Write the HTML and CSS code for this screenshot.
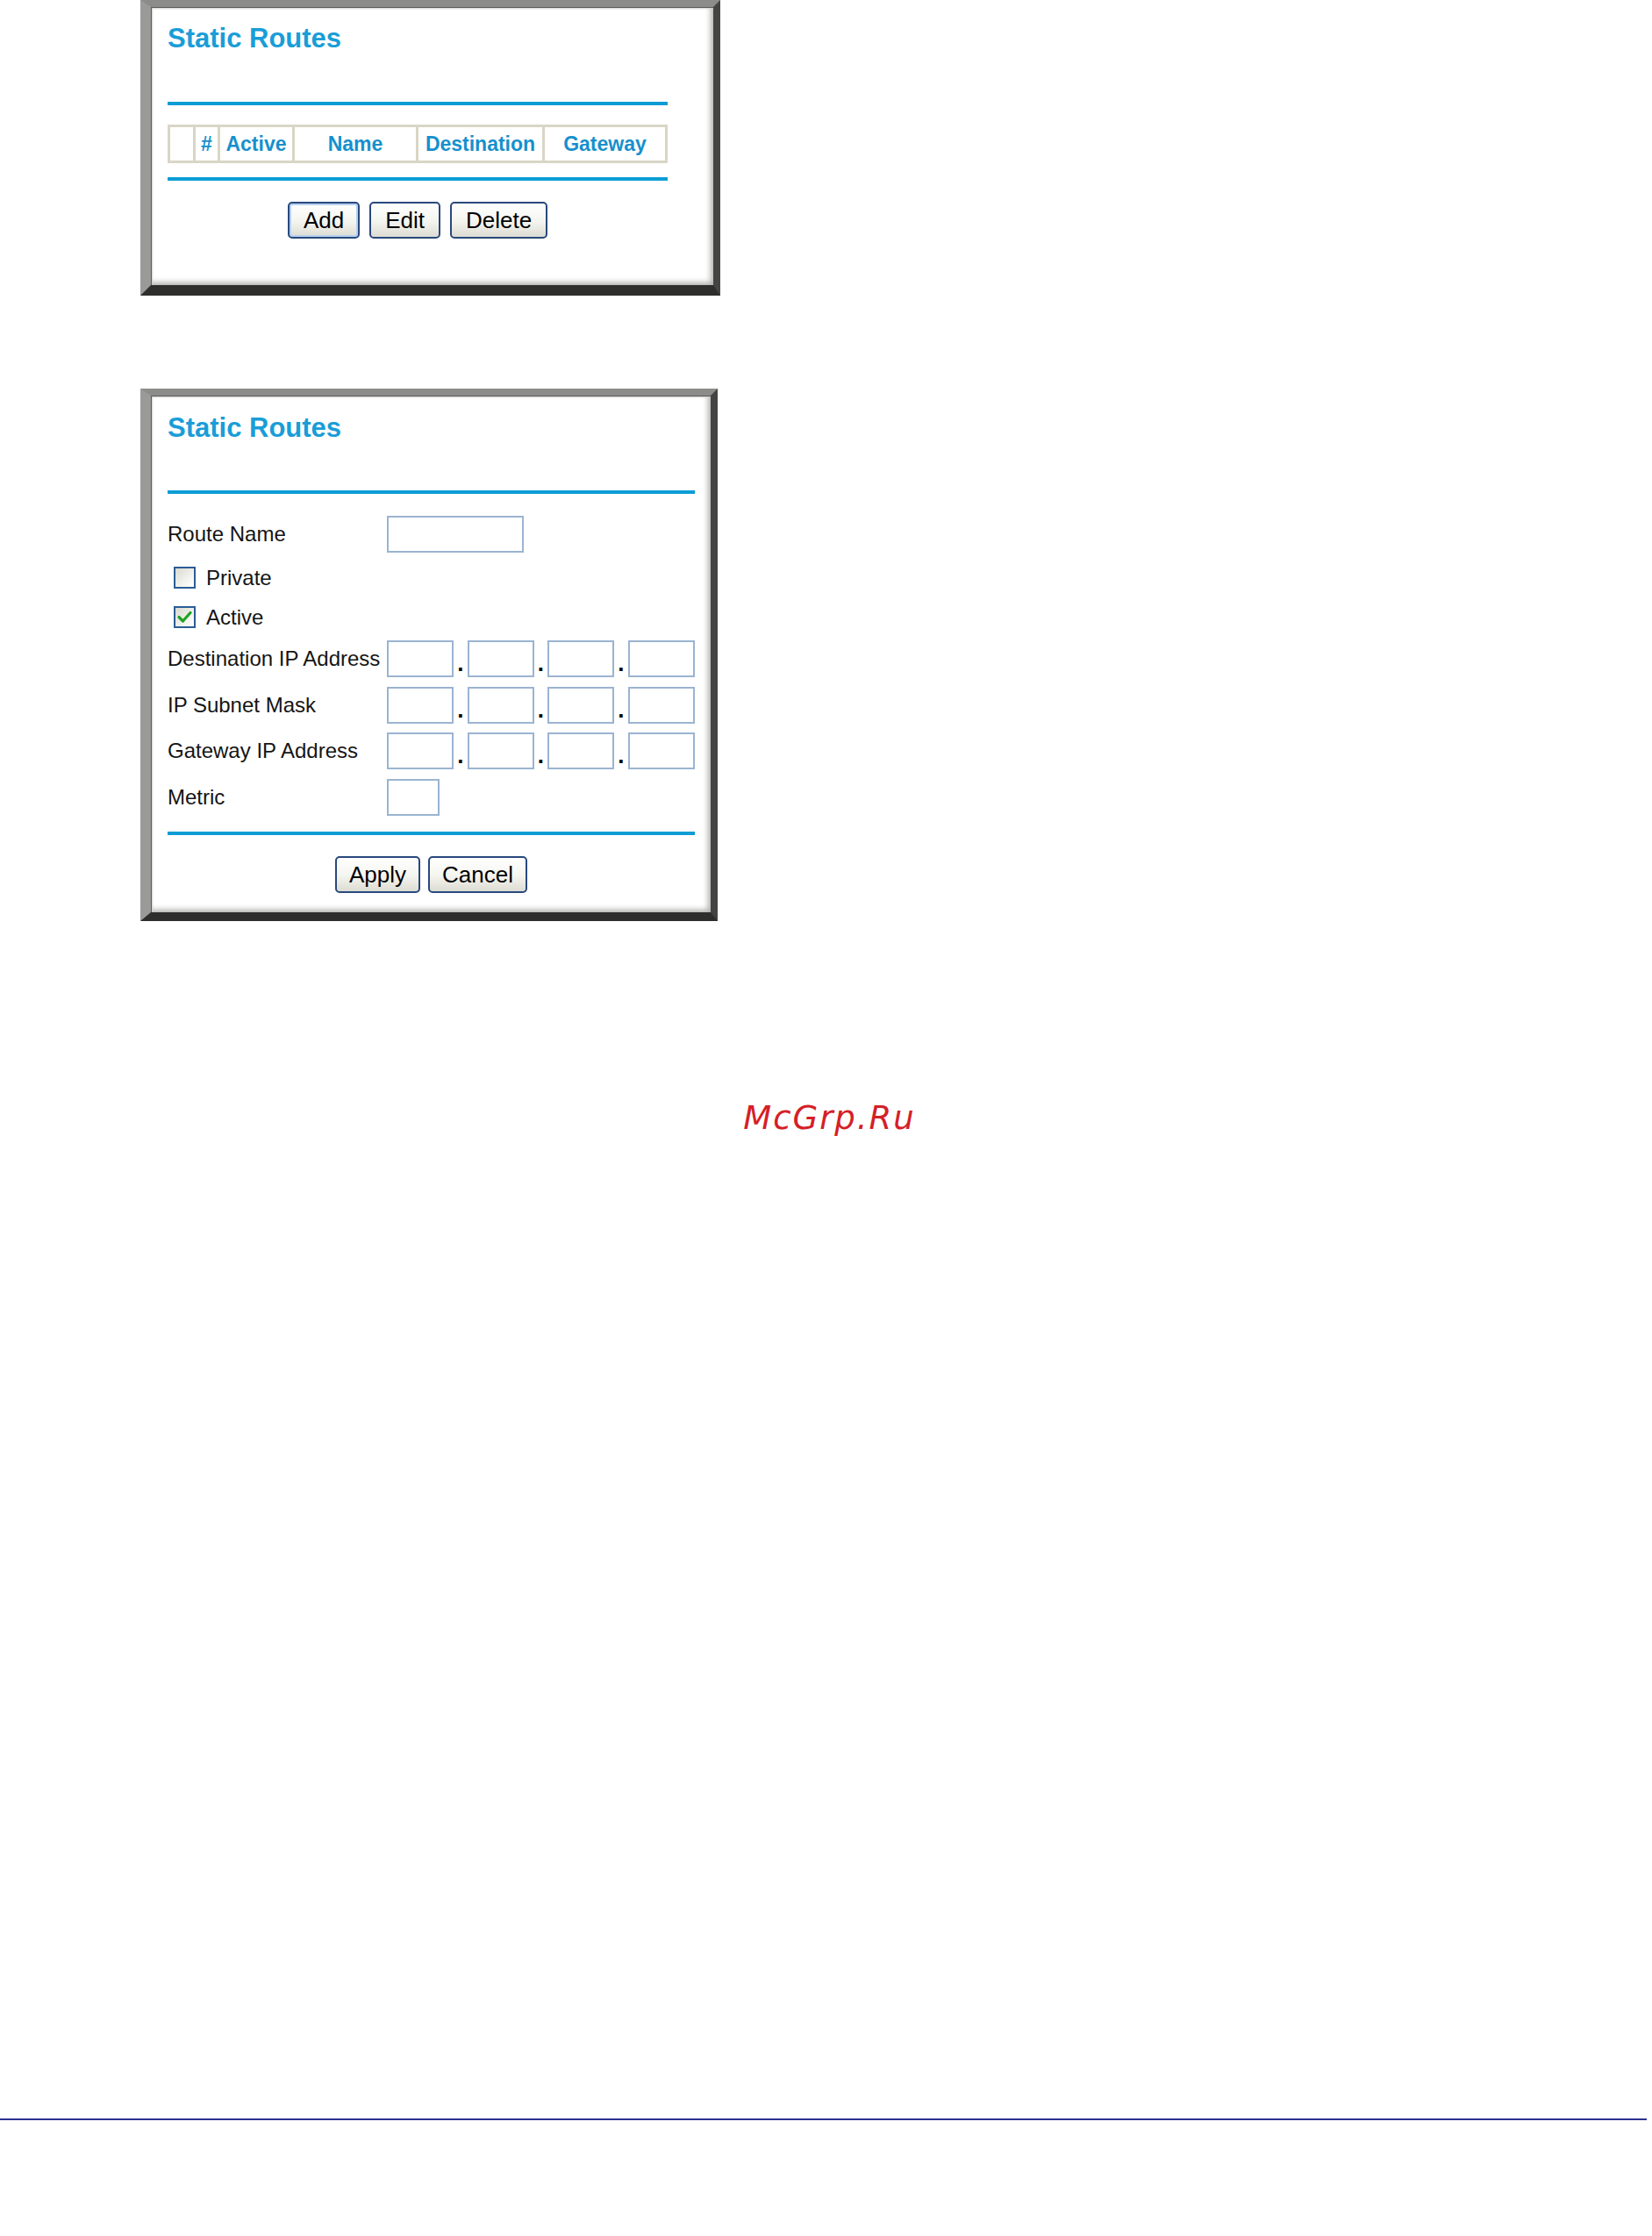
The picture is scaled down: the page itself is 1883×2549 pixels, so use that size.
FILE: index.html
```html
<!DOCTYPE html>
<html lang="en">
<head>
    <meta charset="UTF-8">
    <meta name="viewport" content="width=device-width, initial-scale=1.0">
    <title>Static Routes</title>
    <link rel="stylesheet" href="styles.css">
</head>
<body>
    <div class="shots">

        <!-- route list -->
        <div class="panel panel-list">
            <div class="content">
                <h1 class="title">Static Routes</h1>
                <div class="rule rule-top"></div>

                <table class="routes">
                    <colgroup>
                        <col class="c-sel">
                        <col class="c-num">
                        <col class="c-active">
                        <col class="c-name">
                        <col class="c-dest">
                        <col class="c-gw">
                    </colgroup>
                    <tr>
                        <th></th>
                        <th>#</th>
                        <th>Active</th>
                        <th>Name</th>
                        <th>Destination</th>
                        <th>Gateway</th>
                    </tr>
                </table>

                <div class="rule rule-list-bottom"></div>

                <div class="actions actions-list">
                    <button class="btn btn-default">Add</button>
                    <button class="btn">Edit</button>
                    <button class="btn">Delete</button>
                </div>
            </div>
        </div>

        <!-- add / edit form -->
        <div class="panel panel-form">
            <div class="content content-wide">
                <h1 class="title">Static Routes</h1>
                <div class="rule rule-top"></div>

                <div class="field field-name">
                    <label>Route Name</label>
                    <input type="text" class="txt txt-name">
                </div>

                <div class="check check-private">
                    <span class="box"></span>
                    <span>Private</span>
                </div>

                <div class="check check-active">
                    <span class="box">
                        <svg viewBox="0 0 21 21" width="21" height="21">
                            <path d="M4 10.5 L8.5 15 L17 5.5" fill="none" stroke="#20a424" stroke-width="3.2" stroke-linecap="round" stroke-linejoin="round"/>
                        </svg>
                    </span>
                    <span>Active</span>
                </div>

                <div class="field field-ip field-first">
                    <label>Destination IP Address</label>
                    <div class="ip">
                        <input type="text" class="txt octet"><span class="dot">.</span>
                        <input type="text" class="txt octet"><span class="dot">.</span>
                        <input type="text" class="txt octet"><span class="dot">.</span>
                        <input type="text" class="txt octet">
                    </div>
                </div>

                <div class="field field-ip">
                    <label>IP Subnet Mask</label>
                    <div class="ip">
                        <input type="text" class="txt octet"><span class="dot">.</span>
                        <input type="text" class="txt octet"><span class="dot">.</span>
                        <input type="text" class="txt octet"><span class="dot">.</span>
                        <input type="text" class="txt octet">
                    </div>
                </div>

                <div class="field field-ip">
                    <label>Gateway IP Address</label>
                    <div class="ip">
                        <input type="text" class="txt octet"><span class="dot">.</span>
                        <input type="text" class="txt octet"><span class="dot">.</span>
                        <input type="text" class="txt octet"><span class="dot">.</span>
                        <input type="text" class="txt octet">
                    </div>
                </div>

                <div class="field field-ip">
                    <label>Metric</label>
                    <input type="text" class="txt txt-metric">
                </div>

                <div class="rule rule-form-bottom"></div>

                <div class="actions actions-form">
                    <button class="btn">Apply</button>
                    <button class="btn">Cancel</button>
                </div>
            </div>
        </div>
    </div>

    <div class="watermark">McGrp.Ru</div>

    <div class="page-rule"></div>
</body>
</html>
```

FILE: styles.css
```css
body {
  margin: 0;
  background: #fff;
  font-family: "Liberation Sans", Arial, sans-serif;
  color: #151515;
}

.shots {
  margin-left: 160px;
}

/* bevelled screenshot frame */
.panel {
  box-sizing: border-box;
  background: #fff;
  border-style: solid;
  border-width: 8px 8px 11px 12px;
  border-color: #8c8c8a #444442 #2e2e2c #9a9a98;
  box-shadow: inset 1px 1px 0 #5c5c5a, inset 3px 3px 2px -1px #d0d0cc, inset -5px -5px 6px -2px #b0b0ac;
}

.panel-list {
  width: 661px;
  border-bottom-width: 12px;
}

.panel-form {
  width: 658px;
  margin-top: 106px;
  border-bottom-width: 10px;
}

.content {
  width: 570px;
  padding: 18px 0 53px 19px;
}

.content-wide {
  width: 601px;
  padding: 19px 0 22px 19px;
}

.title {
  margin: 0;
  font-size: 31px;
  line-height: 36px;
  font-weight: bold;
  color: #1a9dd8;
}

.rule {
  height: 4px;
  background: #0c9dd5;
}

.rule-top {
  margin-top: 54px;
}

.panel-form .rule-top {
  margin-top: 53px;
}

.rule-list-bottom {
  margin-top: 16px;
}

.rule-form-bottom {
  margin-top: 18.5px;
}

/* route list header */
.routes {
  margin-top: 22px;
  width: 570px;
  table-layout: fixed;
  border-collapse: separate;
  border-spacing: 3px;
  background: #d9d6c6;
}

.routes .c-sel { width: 26px; }
.routes .c-num { width: 25px; }
.routes .c-active { width: 82px; }
.routes .c-name { width: 138px; }
.routes .c-dest { width: 141px; }
.routes .c-gw { width: 137px; }

.routes th {
  height: 38px;
  padding: 0;
  background: #fff;
  font-size: 23px;
  font-weight: bold;
  color: #1690cd;
  text-align: center;
  white-space: nowrap;
  overflow: hidden;
}

/* buttons */
.actions {
  display: flex;
  justify-content: center;
  margin-top: 24px;
}

.actions-list {
  gap: 11px;
}

.actions-form {
  gap: 9px;
}

.btn {
  height: 42px;
  padding: 0 16px;
  font-family: "Liberation Sans", Arial, sans-serif;
  font-size: 26px;
  color: #000;
  background: linear-gradient(#ffffff, #f4f4ef 55%, #dcdcd3);
  border: 2px solid #28497c;
  border-radius: 5px;
}

.actions-form .btn {
  padding: 0 14px;
}

.btn-default {
  box-shadow: inset 0 0 0 2px #b6d0f2;
}

/* form */
.field {
  display: flex;
  align-items: center;
  margin-top: 10.5px;
}

.field label,
.check {
  font-size: 24px;
}

.field label {
  width: 250px;
  white-space: nowrap;
}

.field-name {
  margin-top: 25px;
}

.field-first {
  margin-top: 14px;
}

.txt {
  box-sizing: border-box;
  height: 42px;
  margin: 0;
  padding: 0;
  background: #fff;
  border: 2px solid #9bb4d1;
}

.txt-name {
  width: 156px;
}

.txt-metric {
  width: 60px;
}

.ip {
  display: flex;
  align-items: flex-end;
}

.octet {
  width: 76px;
}

.dot {
  width: 15.5px;
  text-align: center;
  font-size: 26px;
  font-weight: bold;
  line-height: 26px;
  color: #000;
  margin-bottom: 3px;
}

.check {
  display: flex;
  align-items: center;
  gap: 12px;
  padding-left: 7px;
  height: 25px;
}

.check-private {
  margin-top: 16px;
}

.check-active {
  margin-top: 20px;
}

.box {
  box-sizing: border-box;
  width: 25px;
  height: 25px;
  border: 2px solid #2b5d95;
  background: linear-gradient(135deg, #d9d9d2, #f6f6f3 70%, #fff);
  display: flex;
  align-items: center;
  justify-content: center;
}

.box svg {
  display: block;
}

/* page extras */
.watermark {
  margin-top: 205px;
  padding-left: 8px;
  text-align: center;
  font-family: "DejaVu Sans", sans-serif;
  font-style: oblique;
  font-size: 37px;
  line-height: 40px;
  letter-spacing: 2px;
  color: #d42027;
}

.page-rule {
  margin-top: 1120px;
  width: 1877px;
  height: 2px;
  background: #2e3192;
}
```
